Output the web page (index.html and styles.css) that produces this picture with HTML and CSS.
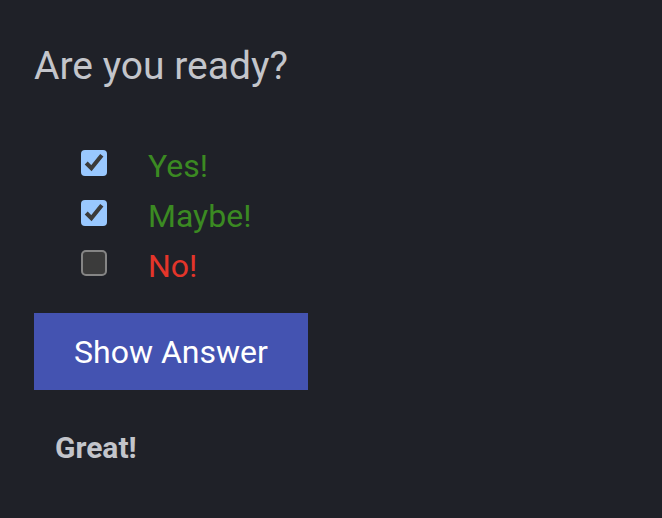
FILE: index.html
```html
<!DOCTYPE html>
<html lang="en">
<head>
<meta charset="utf-8">
<title>Are you ready?</title>
<link rel="stylesheet" href="styles.css">
</head>
<body>
  <main class="quiz">
    <h1 class="quiz-title">Are you ready?</h1>
    <ul class="options">
      <li class="option">
        <input class="option-box" type="checkbox" id="opt-yes" checked>
        <label class="option-label good" for="opt-yes">Yes!</label>
      </li>
      <li class="option">
        <input class="option-box" type="checkbox" id="opt-maybe" checked>
        <label class="option-label good" for="opt-maybe">Maybe!</label>
      </li>
      <li class="option">
        <input class="option-box" type="checkbox" id="opt-no">
        <label class="option-label bad" for="opt-no">No!</label>
      </li>
    </ul>
    <button class="show-btn" type="button">Show Answer</button>
    <p class="answer">Great!</p>
  </main>
</body>
</html>
```

FILE: styles.css
```css
html, body {
  margin: 0;
  background: #1f2128;
  color-scheme: dark;
}

body {
  font-family: Roboto, "Liberation Sans", sans-serif;
  color: #c3c5cb;
}

.quiz {
  padding: 43px 34px 0;
  display: flex;
  flex-direction: column;
  align-items: flex-start;
}

.quiz-title {
  margin: 0;
  font-size: 39px;
  font-weight: 400;
  line-height: 47px;
  color: #c3c5cb;
}

.options {
  list-style: none;
  margin: 51px 0 0;
  padding: 0 0 0 47px;
  display: flex;
  flex-direction: column;
}

.option {
  display: flex;
  align-items: center;
  height: 50px;
}

.option-box {
  zoom: 2;
  margin: 0 0 3px 0;
}

.option-label {
  font-size: 32px;
  line-height: 50px;
  margin-left: 41px;
}

.good { color: #3b8a22; }
.bad { color: #e4352a; }

.show-btn {
  margin-top: 22px;
  width: 274px;
  height: 77px;
  border: 0;
  border-radius: 0;
  background: #4453b1;
  color: #ffffff;
  font-family: Roboto, "Liberation Sans", sans-serif;
  font-size: 32px;
  padding: 0;
}

.answer {
  margin: 40px 0 0 21px;
  font-size: 30px;
  font-weight: 700;
  line-height: 35px;
  color: #c3c5cb;
}
```
